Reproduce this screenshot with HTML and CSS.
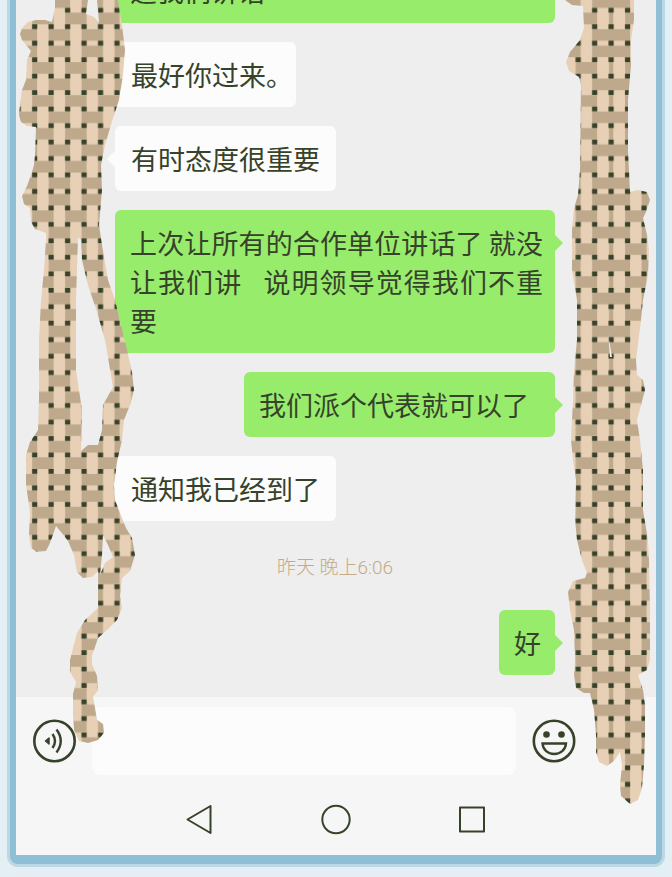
FILE: index.html
```html
<!DOCTYPE html>
<html lang="zh-CN">
<head>
<meta charset="utf-8">
<meta name="viewport" content="width=device-width, initial-scale=1">
<title>聊天</title>
<link rel="stylesheet" href="styles.css">
</head>
<body>
<main class="phone">
  <section class="chat">
    <p class="bubble sent full">逼我们讲话</p>
    <p class="bubble received">最好你过来。</p>
    <p class="bubble received">有时态度很重要</p>
    <p class="bubble sent full">上次让所有的合作单位讲话了 就没让我们讲&nbsp;&nbsp; 说明领导觉得我们不重要</p>
    <p class="bubble sent">我们派个代表就可以了&nbsp;&nbsp;</p>
    <p class="bubble received">通知我已经到了</p>
    <time class="stamp">昨天 晚上6:06</time>
    <p class="bubble sent">好</p>
  </section>

  <form class="composer">
    <button class="icon" type="button" aria-label="语音">
      <svg viewBox="0 0 44 44" width="44" height="44" fill="none" stroke="currentColor" stroke-width="2.600">
        <circle cx="22.500" cy="22" r="20.200"/>
        <path d="M13.500 22l3.500-3v6z" fill="currentColor" stroke-width="1.500" stroke-linejoin="round"/>
        <path d="M20.500 15q5 7 0 14M24.500 10.500q8.500 11.500 0 23" stroke-width="2.400"/>
      </svg>
    </button>
    <input class="message" type="text" aria-label="消息">
    <button class="icon" type="button" aria-label="表情">
      <svg viewBox="0 0 44 44" width="44" height="44" fill="none" stroke="currentColor" stroke-width="2.600">
        <circle cx="22" cy="22" r="20.200"/>
        <circle cx="14.500" cy="15.500" r="3.300" fill="currentColor" stroke="none"/>
        <circle cx="29.500" cy="15.500" r="3.300" fill="currentColor" stroke="none"/>
        <path d="M10.500 24.500h23.500c-.5 6.500-5.500 10.500-11.800 10.500s-11.200-4-11.700-10.500z" stroke-width="2.400"/>
      </svg>
    </button>
  </form>

  <nav class="keys">
    <button class="icon" type="button" aria-label="返回">
      <svg viewBox="0 0 44 44" width="44" height="44" fill="none" stroke="currentColor" stroke-width="2" stroke-linejoin="round"><path d="M9.500 21.500L32.500 8v27z"/></svg>
    </button>
    <button class="icon" type="button" aria-label="主屏幕">
      <svg viewBox="0 0 44 44" width="44" height="44" fill="none" stroke="currentColor" stroke-width="2"><circle cx="22" cy="21.500" r="13.700"/></svg>
    </button>
    <button class="icon" type="button" aria-label="最近任务">
      <svg viewBox="0 0 44 44" width="44" height="44" fill="none" stroke="currentColor" stroke-width="2" stroke-linejoin="round"><path d="M10 9.500h24v24H10z"/></svg>
    </button>
  </nav>

  <svg class="weave weave-left" viewBox="16 0 124 810" width="124" height="810" aria-hidden="true">
    <defs>
      <pattern id="weave" width="90" height="90" patternUnits="userSpaceOnUse" patternTransform="translate(18.200 43.200) scale(1.647)">
        <path fill="#e7d0b5" d="M0 0h90v90H0z"/>
        <g fill="none" stroke="#bfa98c">
          <path stroke-width="2.600" d="M0 0V90M90 0V90"/>
          <path stroke-width="3" stroke-dasharray="3.600 6.400" d="M-1.800 0H93M-1.800 10H93M-1.800 20H93M-1.800 30H93M-1.800 40H93M-1.800 50H93M-1.800 60H93M-1.800 70H93M-1.800 80H93M-1.800 90H93"/>
          <path stroke-width="7" stroke-dasharray="13 7" d="M-1.500 5H91.500M-1.500 25H91.500M-1.500 45H91.500M-1.500 65H91.500M-1.500 85H91.500M8.500 15H81.500M8.500 35H81.500M8.500 55H81.500M8.500 75H81.500"/>
        </g>
        <path fill="none" stroke="#36422a" stroke-width="2.900" stroke-dasharray="3 7" d="M-1.500 0H93M-1.500 10H93M-1.500 20H93M-1.500 30H93M-1.500 40H93M-1.500 50H93M-1.500 60H93M-1.500 70H93M-1.500 80H93M-1.500 90H93"/>
      </pattern>
    </defs>
    <path fill="url(#weave)" fill-rule="evenodd" d="M55 0L55 8L52 22L45 20L36 20L28 22L22 28L20 34L22 40L31 51L27 60L26 80L22 90L20 105L19 115L21 122L27 126L36 127L35 155L34 165L31 175L27 186L22 196L24 204L30 208L31 222L35 229L46 233L46 240L44 270L41 300L39 340L39 400L38 430L30 442L26 455L26 485L30 512L29 535L31 548L37 552L46 551L50 543L56 526L61 532L68 541L74 555L77 572L83 578L92 577L98 571L98 608L85 620L77 633L73 648L70 660L70 672L76 682L73 694L73 715L74 730L79 741L88 743L98 740L104 733L103 724L97 720L95 708L93 697L98 690L97 676L92 664L92 656L98 638L107 630L117 620L122 608L120 596L122 578L130 571L135 555L132 538L126 528L118 508L115 500L114 485L117 462L122 440L124 420L130 405L134 390L132 372L127 350L121 325L115 300L108 280L102 245L99 225L102 190L101 165L105 145L113 118L119 100L123 75L125 50L122 25L118 0ZM88 0L86 14L94 17L99 23L97 0ZM78 237L76 300L76 370L82 410L81 451L88 445L98 445L102 430L103 405L113 387L105 340L97 312L88 285L82 260L81 240ZM103 535L108 545L113 557L105 563L100 575L102 555Z"/>
  </svg>
  <svg class="weave weave-right" viewBox="560 0 96 810" width="96" height="810" aria-hidden="true">
    <path fill="url(#weave)" fill-rule="evenodd" d="M565 0L572 5L583 6L584 28L580 40L570 52L566 62L569 71L579 77L581 85L580 170L578 195L574 208L572 230L572 270L577 300L577 340L574 370L573 400L571 440L573 460L576 480L575 520L577 540L582 560L587 573L585 578L573 581L568 592L570 610L574 630L575 660L574 675L576 688L584 693L590 693L594 710L596 735L596 752L599 762L607 766L614 761L620 752L622 765L620 785L621 796L630 804L638 800L642 788L644 765L645 735L645 705L643 690L638 675L647 670L650 660L650 610L649 560L648 540L643 510L643 470L640 440L637 420L641 405L645 390L643 380L637 375L636 360L641 320L643 300L648 275L649 250L647 235L643 218L646 212L650 200L647 192L638 190L630 192L628 150L628 100L631 65L631 40L634 20L634 0ZM608 334L612 357L610 357Z"/>
  </svg>
</main>
</body>
</html>
```
FILE: styles.css
```css
* {
  box-sizing: border-box;
}

body {
  margin: 0;
  min-height: 100vh;
  display: flex;
  padding: 0 10px 13px;
  background: #e3eff5;
  color: #36422a;
  font-family: "Noto Sans CJK SC", sans-serif;
}

.phone {
  position: relative;
  flex: 1;
  display: flex;
  flex-direction: column;
  border: 6px solid #8fbfd4;
  border-top: 0;
  border-bottom-width: 9px;
  border-radius: 0 0 8px 8px;
  box-shadow: 0 0 0 3px #bcd8e5;
  background: #f6f6f6;
}

.chat {
  flex: 1 0 0;
  min-height: 0;
  overflow: hidden;
  display: flex;
  flex-direction: column;
  justify-content: flex-end;
  gap: 19px;
  padding: 0 101px 22px 99px;
  background: #eeeeee;
}

.bubble {
  position: relative;
  flex: none;
  margin: 0;
  padding: 13px 16px;
  border-radius: 6px;
  font-size: 27px;
  line-height: 39px;
}

.bubble::after {
  content: "";
  position: absolute;
  top: 25px;
  border: 8px solid transparent;
}

.received {
  align-self: flex-start;
  background: #fcfcfc;
  font-feature-settings: "halt";
}

.received::after {
  right: 100%;
  border-left-width: 0;
  border-right-color: #fcfcfc;
}

.sent {
  align-self: flex-end;
  padding-right: 14px;
  padding-left: 15px;
  background: #98ec6c;
}

.sent::after {
  left: 100%;
  border-right-width: 0;
  border-left-color: #98ec6c;
}

.full {
  align-self: stretch;
  padding-right: 12px;
  text-align: justify;
}

.stamp {
  flex: none;
  align-self: center;
  padding-top: 4px;
  color: #c6aa85;
  font-family: Roboto, "Noto Sans CJK SC", sans-serif;
  font-size: 19px;
  font-weight: 300;
  line-height: 47px;
}

.composer {
  display: flex;
  align-items: center;
  gap: 16px;
  padding: 10px 80px 10px 16px;
}

.message {
  flex: 1;
  min-width: 0;
  height: 68px;
  padding: 0 16px;
  border: 0;
  border-radius: 8px;
  background: #fcfcfc;
  color: inherit;
  font: inherit;
  font-size: 27px;
}

.keys {
  display: flex;
  justify-content: center;
  gap: 92px;
  padding: 13px 0;
}

.icon {
  display: block;
  flex: none;
  padding: 0;
  border: 0;
  background: none;
  color: #36422a;
}

.icon svg {
  display: block;
}

.weave {
  position: absolute;
  top: 0;
  pointer-events: none;
}

.weave-left {
  left: 0;
}

.weave-right {
  right: 0;
}
```
